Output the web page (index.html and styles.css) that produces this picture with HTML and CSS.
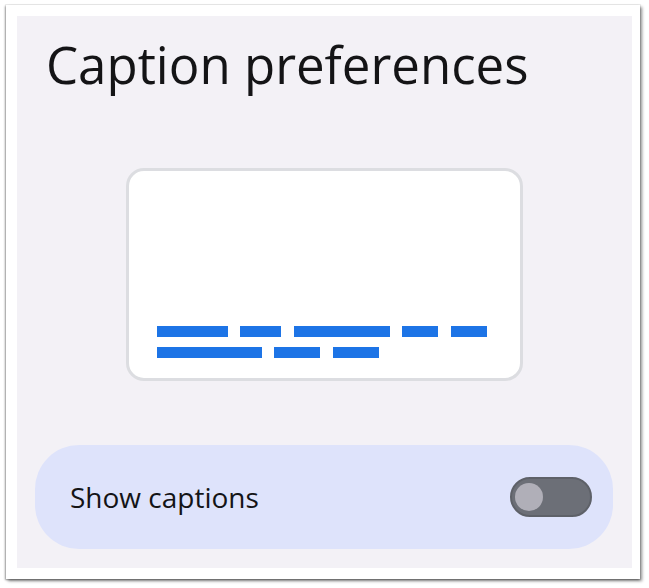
FILE: index.html
```html
<!DOCTYPE html>
<html lang="en">
<head>
<meta charset="utf-8">
<title>Caption preferences</title>
<link rel="stylesheet" href="styles.css">
</head>
<body>
<div class="frame">
  <div class="panel">
    <h1 class="title">Caption preferences</h1>
    <div class="preview">
      <div class="captions">
        <div class="cap-row">
          <span class="bar" style="width:71px"></span>
          <span class="bar" style="width:41px"></span>
          <span class="bar" style="width:96px"></span>
          <span class="bar" style="width:36px"></span>
          <span class="bar" style="width:36px"></span>
        </div>
        <div class="cap-row">
          <span class="bar" style="width:105px"></span>
          <span class="bar" style="width:46px"></span>
          <span class="bar" style="width:46px"></span>
        </div>
      </div>
    </div>
    <div class="setting">
      <span class="setting-label">Show captions</span>
      <span class="switch"><span class="thumb"></span></span>
    </div>
  </div>
</div>
</body>
</html>
```
FILE: styles.css
```css
html, body {
  margin: 0;
  padding: 0;
  background: #ffffff;
}
body {
  font-family: "Open Sans", "Roboto", sans-serif;
  padding: 5px 9px 9px 6px;
  width: 649px;
  height: 588px;
  box-sizing: border-box;
}
.frame {
  width: 634px;
  height: 574px;
  box-sizing: border-box;
  background: #ffffff;
  padding: 11px 8px 11px 11px;
  box-shadow: 0 0 0 1px rgba(0,0,0,0.06), -1px 1px 2px rgba(0,0,0,0.35), 2px 2px 3px rgba(0,0,0,0.45);
}
.panel {
  height: 100%;
  background: #f3f1f6;
  box-sizing: border-box;
  padding: 18px 19px 19px 18px;
  display: flex;
  flex-direction: column;
}
.title {
  margin: 0 0 0 11px;
  font-size: 51px;
  font-weight: 400;
  line-height: 60px;
  color: #141416;
  letter-spacing: 0;
}
.preview {
  align-self: center;
  width: 397px;
  height: 213px;
  box-sizing: border-box;
  margin-top: 74px;
  background: #ffffff;
  border: 3px solid #dcdde1;
  border-radius: 18px;
  display: flex;
  flex-direction: column;
  justify-content: flex-end;
  padding: 0 0 20px 28px;
}
.captions {
  display: flex;
  flex-direction: column;
  gap: 10px;
}
.cap-row {
  display: flex;
  gap: 12.5px;
}
.bar {
  display: block;
  height: 11px;
  background: #1d74e6;
}
.setting {
  margin-top: auto;
  height: 104px;
  border-radius: 44px;
  background: #dee3fb;
  display: flex;
  align-items: center;
  justify-content: space-between;
  padding: 0 21px 0 35px;
}
.setting-label {
  font-size: 28px;
  color: #141416;
  letter-spacing: 0;
}
.switch {
  width: 82px;
  height: 40px;
  box-sizing: border-box;
  border-radius: 20px;
  background: #6c6f77;
  border: 2px solid #5e6168;
  display: flex;
  align-items: center;
  padding-left: 3px;
}
.thumb {
  width: 28px;
  height: 28px;
  border-radius: 50%;
  background: #b0afb8;
}
```
